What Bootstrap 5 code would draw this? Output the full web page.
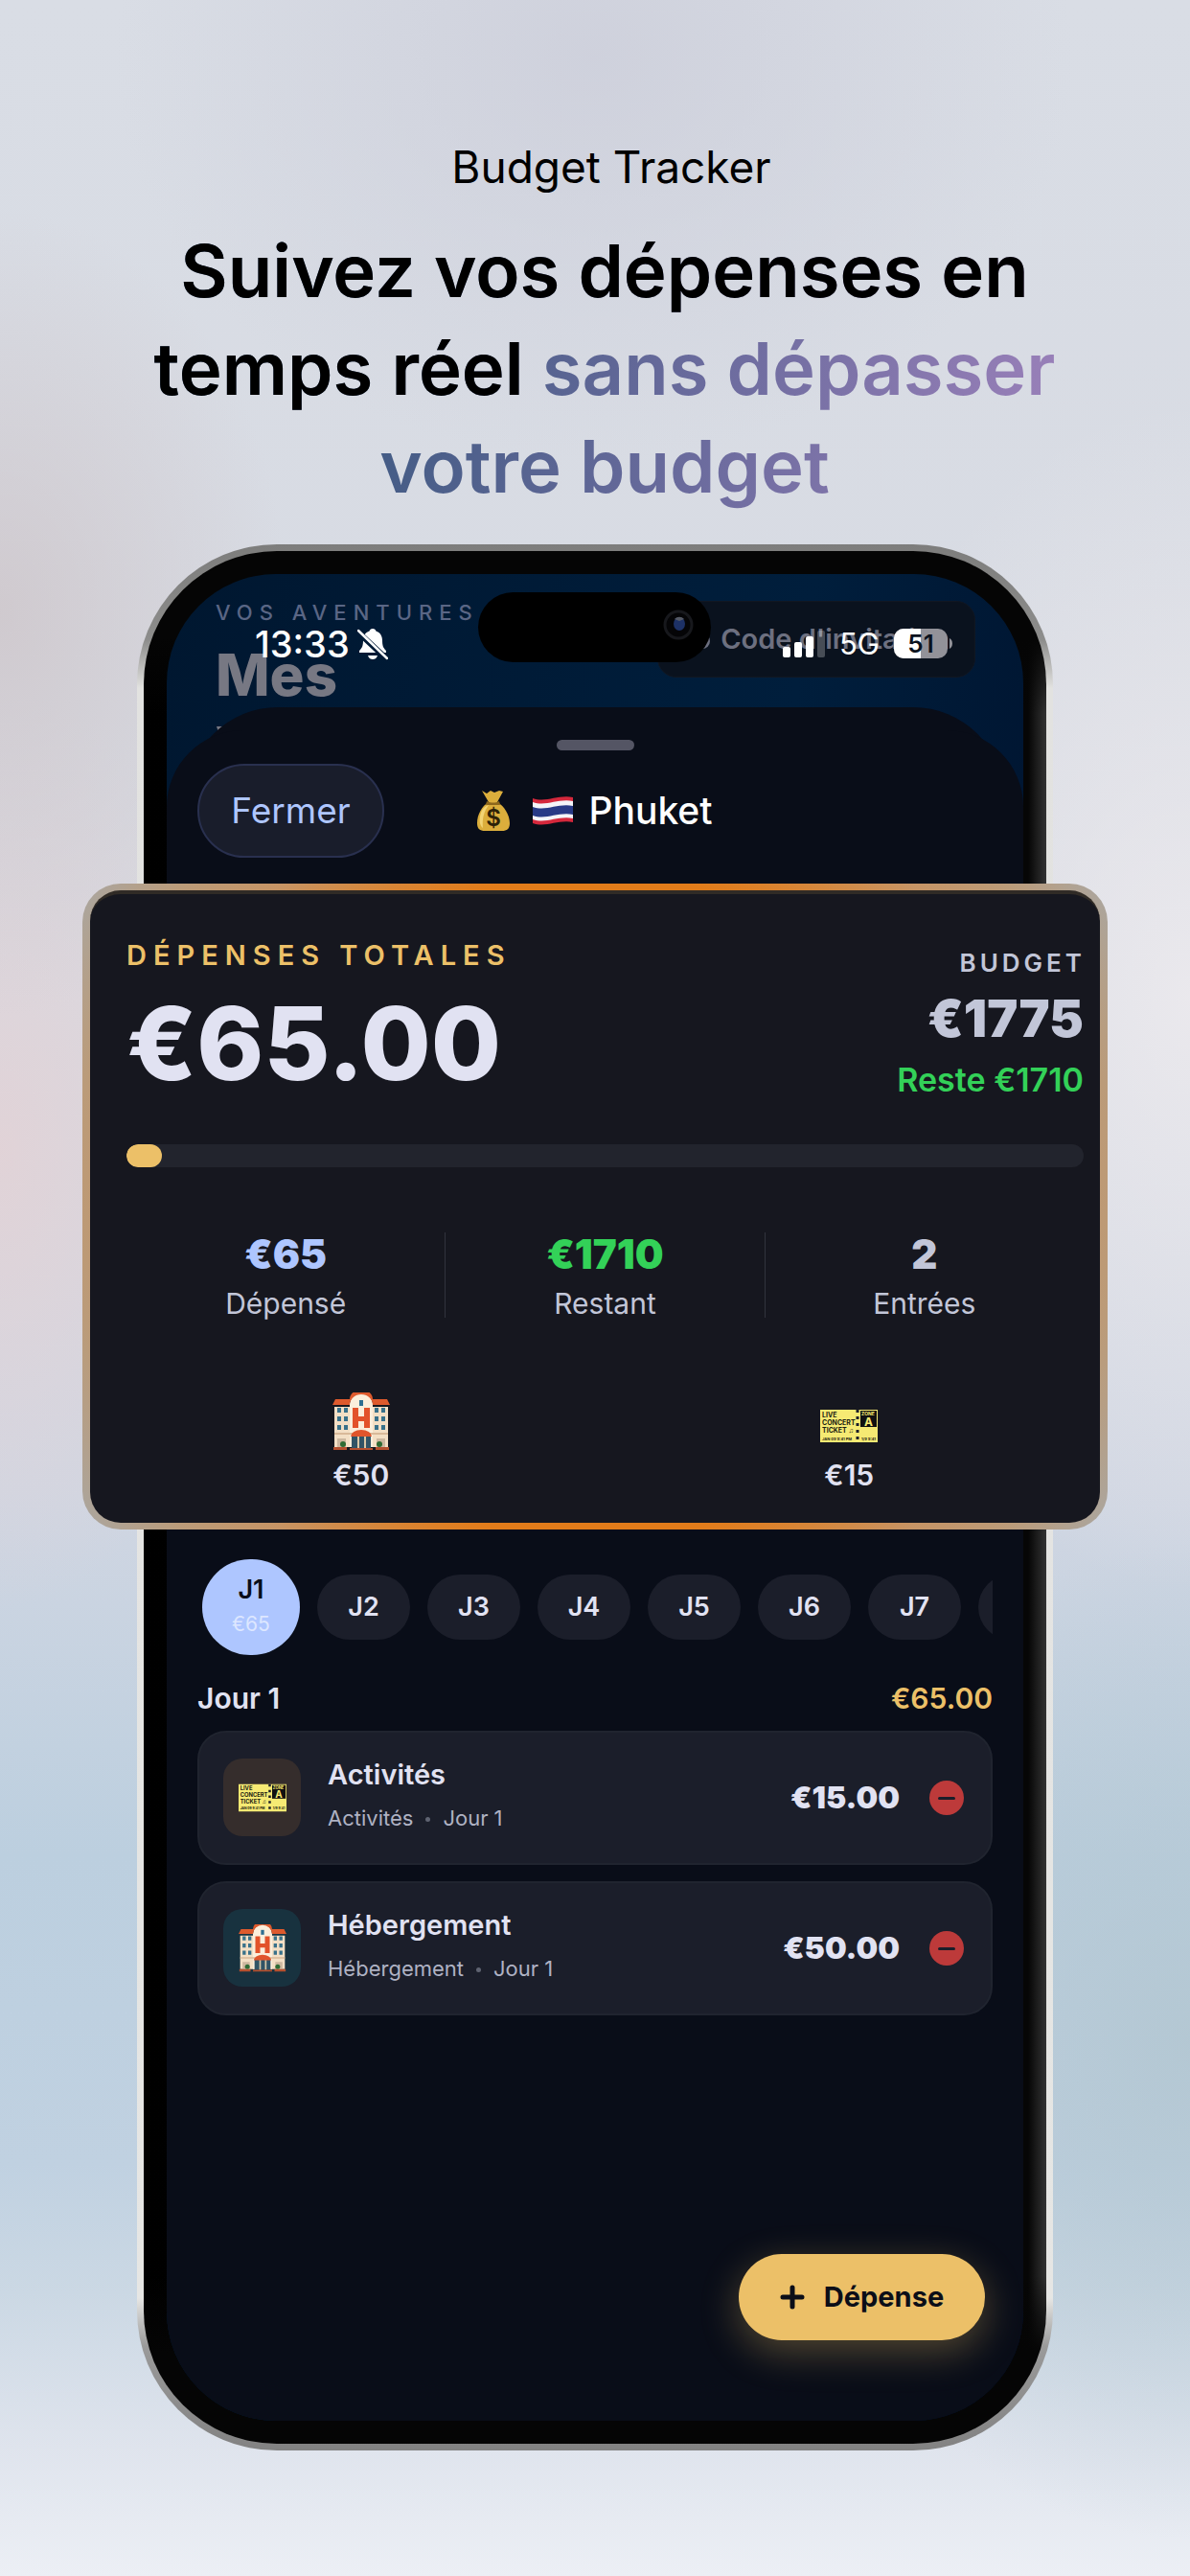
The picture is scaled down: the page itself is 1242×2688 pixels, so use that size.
<!DOCTYPE html>
<html lang="fr">
<head>
<meta charset="utf-8">
<meta name="viewport" content="width=device-width, initial-scale=1">
<title>Budget Tracker</title>
<link rel="stylesheet" href="https://cdn.jsdelivr.net/npm/bootstrap@5.3.0/dist/css/bootstrap.min.css">
<script src="https://cdn.jsdelivr.net/npm/bootstrap@5.3.0/dist/js/bootstrap.bundle.min.js" defer></script>
<style>
  :root { --ink:#090d18; --gold:#ecc068; --mist:#e1e2f2; --steel:#c2c6d8; --green:#33d158; --sky:#aec6ff; }
  body {
    font-family: Inter, "Liberation Sans", sans-serif; color: var(--mist); min-height: 2688px;
    background:
      radial-gradient(300px 420px at 0 640px, rgba(205,196,200,.75), transparent),
      radial-gradient(260px 480px at 0 1200px, rgba(226,210,214,.9), transparent),
      radial-gradient(420px 520px at 100% 2130px, rgba(178,198,209,.85), transparent),
      radial-gradient(380px 620px at 100% 1040px, rgba(236,234,238,.9), transparent),
      radial-gradient(500px 420px at 620px 60px, rgba(204,206,218,.8), transparent),
      linear-gradient(#d9dde5 0, #d7dae2 40%, #d0d6e2 58%, #bccfdf 72%, #c0d1e1 84%, #cbd8e4 89%, #dfe4ed 95%, #eceff5 100%);
  }
  .promo { padding-top: 144px; color: #000; }
  .promo-kicker { font-size: 46px; line-height: 60px; margin-bottom: 27px; padding-left: 34px; }
  .promo-title {
    font-size: 76px; line-height: 102px; font-weight: 600; margin-bottom: 31px; padding-left: 20px;
    background: linear-gradient(100deg, #3f5a82 30%, #6f6da0 62%, #a083bd 92%); -webkit-background-clip: text; background-clip: text; color: transparent;
  }
  .promo-title span { color: #000; }

  .device { width: 77%; max-width: 956px; padding: 7px; border-radius: 146px; background: linear-gradient(#7d7d7c 0, #8d8d8c 100px, #e2e2e0 150px, #e6e6e4 1830px, #9a9a9a 1880px, #828282 100%); }
  .bezel { padding: 24px; border-radius: 139px; background: linear-gradient(#050505 90px, transparent 170px, transparent 1800px, #050505 1880px), linear-gradient(90deg, #000 0, #060606 97%, #060606 98%, #333 100%); }
  .viewport { position: relative; border-radius: 114px; background: linear-gradient(100deg, #001730 0, #001e3c 55%, #00112c 90%); }

  .island { position: absolute; left: 50%; top: 19px; width: 243px; height: 73px; margin-left: -122px; border-radius: 37px; background: #000; z-index: 3; }
  .island svg { position: absolute; right: 18px; top: 17px; }
  .under { height: 139px; padding: 28px 50px 0 51px; }
  .eyebrow { font-size: 22px; line-height: 24px; font-weight: 500; letter-spacing: 7px; color: #5a6685; }
  .under-title { font-size: 60px; line-height: 72px; font-weight: 800; color: #777883; margin-top: 17px; }
  .under-copy { position: absolute; left: 52px; top: 159px; }
  .invite { height: 80px; width: 332px; border: 1px solid #111722; border-radius: 20px; background: #0a121e; color: #6d7080; font-size: 29px; font-weight: 600; padding: 0 26px 0 40px; }
  .status { position: absolute; inset: 55px 73px auto 92px; height: 36px; color: #fff; z-index: 4; }
  .clock { font-size: 38px; line-height: 36px; font-weight: 500; }
  .network { font-size: 31px; line-height: 36px; margin: 0 15px; }

  .sheet { position: relative; padding: 34px 32px 84px; border-radius: 0 0 114px 114px; }
  .sheet::before { content: ""; position: absolute; inset: 0 20px auto 21px; height: 140px; border-radius: 95px 95px 0 0; background: var(--ink); }
  .sheet::after { content: ""; position: absolute; inset: 24px 0 0; border-radius: 80px 80px 114px 114px; background: var(--ink); }
  .sheet > * { position: relative; z-index: 1; }
  .grabber { width: 81px; height: 11px; border-radius: 6px; background: #545564; }
  .sheet-head { height: 98px; margin-top: 14px; }
  .btn-close-sheet { width: 195px; height: 98px; border: 2px solid #29304f; border-radius: 49px; background: #191d2b; color: var(--sky); font-size: 37px; }
  .btn-close-sheet:hover { background: #20263a; color: var(--sky); }
  .sheet-title { position: absolute; left: 0; right: 0; font-size: 39px; line-height: 48px; font-weight: 500; color: #fff; margin: 0; }

  .overview { margin: 27px -120px 0; padding: 7px 8px; border-radius: 40px; background: radial-gradient(circle, #e27c1a 350px, #c69465 470px, #bb9b79 545px, #aca59c 620px); }
  .overview-body { border-radius: 32px; padding: 46px 17px 0 38px; height: 660px; background: #16171f; border-top: 4px solid #302b26; }
  .label-gold { font-size: 29px; line-height: 36px; font-weight: 600; letter-spacing: 7px; color: var(--gold); }
  .total { font-size: 106px; line-height: 110px; font-weight: 800; margin-top: 19px; }
  .budget-side { padding-top: 10px; }
  .label-steel { font-size: 26px; line-height: 32px; font-weight: 600; letter-spacing: 4px; margin-right: -2px; color: var(--steel); }
  .cap-total { font-size: 54px; line-height: 60px; font-weight: 900; color: var(--steel); margin-top: 12px; }
  .left-over { font-size: 34px; line-height: 40px; font-weight: 600; color: var(--green); margin-top: 14px; }
  .meter { height: 24px; border-radius: 12px; background: #22242d; margin-top: 47px; }
  .meter .progress-bar { border-radius: 12px; background: var(--gold); }
  .stats { margin-top: 68px; }
  .stats > div { height: 89px; }
  .stats > div + div { border-left: 1px solid #31333d; }
  .stat-value { font-size: 42px; line-height: 46px; font-weight: 900; }
  .stat-name { font-size: 30px; line-height: 38px; color: var(--steel); margin-top: 9px; }
  .cats { margin: 78px -10px 0; }
  .cat-sum { font-size: 30px; line-height: 36px; font-weight: 600; margin-top: 6px; }

  .day-strip { margin-top: 31px; height: 100px; overflow: hidden; gap: 18px; padding-left: 5px; }
  .day-pill { flex: 0 0 97px; height: 68px; border: 0; border-radius: 34px; padding: 0; background: #1b1e2a; color: var(--mist); font-size: 27px; font-weight: 600; }
  .day-pill.on { flex-basis: 102px; height: 100px; border-radius: 50px; background: var(--sky); color: var(--ink); line-height: 34px; }
  .day-pill.on span { font-size: 21px; line-height: 34px; font-weight: 400; color: #dde7ff; margin-top: 2px; }
  .day-head { font-size: 30px; line-height: 36px; font-weight: 600; margin-top: 27px; }
  .entry { height: 140px; border: 2px solid #20242f; border-radius: 30px; background: #1b1e2a; padding: 0 28px 0 25px; }
  .entry + .entry { margin-top: 17px; }
  .entry-icon { width: 81px; height: 81px; border-radius: 20px; margin-bottom: 1px; }
  .entry-text { margin: 0 0 8px 28px; }
  .entry-name { font-size: 29px; line-height: 36px; font-weight: 600; }
  .entry-meta { font-size: 22px; line-height: 28px; color: #afb2c3; margin-top: 13px; }
  .entry-meta i { width: 5px; height: 5px; border-radius: 50%; background: #5f6371; margin: 4px 13px 0; }
  .entry-sum { font-size: 32px; font-weight: 900; margin-right: 31px; }
  .btn-minus { width: 36px; height: 36px; padding: 0; border: 0; border-radius: 50%; background: #bd3a3a; }
  .btn-minus::before { content: ""; display: block; width: 18px; height: 3px; margin: auto; border-radius: 2px; background: #1b1e2a; }
  .btn-add { width: 257px; height: 90px; margin: 249px 8px 0 0; gap: 20px; border: 0; border-radius: 45px; background: #ecc068; color: #0b0e18; font-size: 29px; font-weight: 700; box-shadow: 0 12px 40px rgba(236,192,104,.32); }
</style>
</head>
<body>
<svg class="d-none" aria-hidden="true">
  <symbol id="hotel" viewBox="0 0 60 60">
    <path d="M2 14h56v42H2z" fill="#f3dfc5"/><path d="M18 56V12a12 12 0 0 1 24 0v44z" fill="#fbeedb"/>
    <path d="M0 12l3-6h15a12 10 0 0 1 24 0h15l3 6H42a12 11 0 0 0-24 0z" fill="#dd5a2d"/><path d="M20 13V9a10 7 0 0 1 20 0v4z" fill="#fbeedb"/>
    <path d="M28 7h4v6h-4z" fill="#2f6f91"/>
    <path d="M21 15h6v9h6v-9h6v21h-6v-7h-6v7h-6z" fill="#e2522a"/>
    <path d="M5 15h4v5H5zm7 0h4v5h-4zM5 24h4v5H5zm7 0h4v5h-4zM5 33h4v5H5zm7 0h4v5h-4zM44 15h4v5h-4zm7 0h4v5h-4zM44 24h4v5h-4zm7 0h4v5h-4zM44 33h4v5h-4zm7 0h4v5h-4z" fill="#38718a"/>
    <path d="M2 41h56v2H2z" fill="#d9b999"/><path d="M20 44h20v13H20z" fill="#315466"/><path d="M26 44h2v13h-2zm7 0h2v13h-2z" fill="#d9c7a6"/>
    <path d="M19 45a11 7 0 0 1 22 0z" fill="#e0552c"/><path d="M5 47h9v9H5zm41 0h9v9h-9z" fill="#cdb8a0"/>
    <circle cx="11" cy="53" r="3" fill="#2e6b34"/><circle cx="49" cy="53" r="3" fill="#2e6b34"/><path d="M1 56h14v3H1zm44 0h14v3H45zM18 57h24v2H18z" fill="#b5502f"/>
  </symbol>
  <symbol id="ticket" viewBox="0 0 60 34">
    <path d="M0 0h60v34H0z" fill="#f6ea73"/><path d="M42 1h17v17H42z" fill="#111"/>
    <path d="M39 0v34" stroke="#1b1e2a" stroke-width="3" stroke-dasharray="3 4"/>
    <g font-family="Inter, sans-serif" font-weight="700" fill="#1c1c12"><text x="2" y="8" font-size="7">LIVE</text><text x="2" y="16" font-size="7">CONCERT</text><text x="2" y="24" font-size="7">TICKET ♫</text><text x="2" y="32" font-size="4">JAN 09  9:41 PM</text><text x="43" y="32" font-size="4">1/9 9:41</text></g>
    <g font-family="Inter, sans-serif" font-weight="700" fill="#f6ea73"><text x="43" y="6" font-size="5">ZONE</text><text x="46" y="17" font-size="12">A</text></g>
  </symbol>
</svg>

<header class="promo text-center">
  <p class="promo-kicker">Budget Tracker</p>
  <h1 class="promo-title"><span>Suivez vos dépenses en<br>temps réel</span> sans dépasser<br>votre budget</h1>
</header>

<main class="device mx-auto">
  <div class="bezel">
    <div class="viewport">
      <div class="status d-flex justify-content-between align-items-center">
        <div class="d-flex align-items-center gap-2">
          <span class="clock">13:33</span>
          <svg width="32" height="34" viewBox="0 0 32 34" fill="#fff" aria-label="Silencieux"><path d="M16 1c2 0 3 1 3.400 2.500C24 5 26 9 26 13c0 6 1 8 4 11v2H2v-2c3-3 4-5 4-11 0-4 2-8 6.600-9.500C13 2 14 1 16 1zM11 29h10c-1 3-3 4-5 4s-4-1-5-4z"/><path d="M0 4l31 29" stroke="#001a36" stroke-width="6"/><path d="M1 3l30 29" stroke="#fff" stroke-width="2.500" stroke-linecap="round"/></svg>
        </div>
        <div class="d-flex align-items-center">
          <svg width="44" height="30" viewBox="0 0 44 30" fill="#fff" aria-label="Signal"><rect y="18" width="8" height="11" rx="2"/><rect x="12" y="13" width="8" height="16" rx="2"/><rect x="24" y="7" width="8" height="22" rx="2"/><rect x="36" y="1" width="8" height="28" rx="2" opacity=".25"/></svg>
          <span class="network">5G</span>
          <svg width="62" height="32" viewBox="0 0 62 32" aria-label="Batterie"><rect width="56" height="31" rx="10" fill="#929299"/><path d="M28 0H10A10 10 0 0 0 0 10v11a10 10 0 0 0 10 10h18z" fill="#fff"/><path d="M58 10c4 2 4 9 0 11z" fill="#929299"/><text x="28" y="25" font-size="26" font-weight="600" font-family="Inter, sans-serif" text-anchor="middle" fill="#0a121e">51</text></svg>
        </div>
      </div>
      <div class="island"><svg width="32" height="34" viewBox="0 0 32 34"><circle cx="16" cy="17" r="14" fill="#050507" stroke="#17181c" stroke-width="3"/><ellipse cx="17" cy="16" rx="6" ry="7" fill="#1d3166"/><path d="M12 11c3-3 7-3 10 0l-5 2z" fill="#555a66"/></svg></div>
      <div class="under d-flex justify-content-between">
        <div class="text-nowrap">
          <div class="eyebrow">VOS AVENTURES</div>
          <div class="under-title">Mes</div>
          <svg class="under-copy" width="8" height="7" viewBox="0 0 8 7" aria-hidden="true"><path d="M0 0h7L2 6z" fill="#777883"/></svg>
        </div>
        <div class="invite d-flex align-items-center justify-content-between text-nowrap">
          <svg width="16" height="22" viewBox="0 0 16 22"><circle cx="6" cy="13" r="8" fill="#6d7080"/><path d="M6 9v8M2 13h8" stroke="#0a121e" stroke-width="2"/></svg>
          <span>Code d'invitation</span>
        </div>
      </div>

      <section class="sheet">
        <div class="grabber mx-auto"></div>
        <div class="sheet-head d-flex align-items-center">
          <h2 class="sheet-title d-flex justify-content-center align-items-center">
            <svg class="me-4" width="34" height="44" viewBox="0 0 34 44" aria-hidden="true"><path d="M5 1l5 3 4-3 4 2 5-2 4 1-6 11c7 4 13 13 13 22 0 6-3 8-8 8H8c-5 0-8-2-8-8 0-9 5-18 12-22z" fill="#dcae3c"/><path d="M10 12c5 2 9 2 13 0l1 4H9z" fill="#8d671c"/><path d="M4 24c2-5 5-7 8-8-5 7-7 14-6 24-4-3-4-10-2-16z" fill="#f3d475"/><text x="17" y="38" text-anchor="middle" font-family="Inter, sans-serif" font-size="24" font-weight="600" fill="#2c2208">$</text></svg>
            <svg class="me-3" width="42" height="30" viewBox="0 0 42 30" aria-hidden="true"><path d="M0 2c14 5 26-4 42-1v26c-16-3-28 6-42 1z" fill="#d5283c"/><path d="M0 6c14 5 26-4 42-1v18c-16-3-28 6-42 1z" fill="#f4f4f8"/><path d="M0 11c14 5 26-4 42-1v9c-16-3-28 6-42 1z" fill="#283a86"/></svg>
            <span>Phuket</span>
          </h2>
          <button type="button" class="btn btn-close-sheet position-relative">Fermer</button>
        </div>

        <section class="overview">
          <div class="overview-body">
            <div class="d-flex justify-content-between">
              <div><div class="label-gold">DÉPENSES TOTALES</div><div class="total">€65.00</div></div>
              <div class="budget-side text-end"><div class="label-steel">BUDGET</div><div class="cap-total">€1775</div><div class="left-over">Reste €1710</div></div>
            </div>
            <div class="progress meter" role="progressbar" aria-label="Budget dépensé" aria-valuenow="65" aria-valuemin="0" aria-valuemax="1775"><div class="progress-bar" style="width:3.66%"></div></div>
            <div class="stats row g-0 text-center">
              <div class="col"><div class="stat-value" style="color:var(--sky)">€65</div><div class="stat-name">Dépensé</div></div>
              <div class="col"><div class="stat-value" style="color:var(--green)">€1710</div><div class="stat-name">Restant</div></div>
              <div class="col"><div class="stat-value" style="color:var(--steel)">2</div><div class="stat-name">Entrées</div></div>
            </div>
            <div class="cats row g-0 text-center">
              <div class="col"><svg width="60" height="62" aria-hidden="true"><use href="#hotel"/></svg><div class="cat-sum">€50</div></div>
              <div class="col"><svg width="60" height="62" aria-hidden="true"><use href="#ticket" y="4"/></svg><div class="cat-sum">€15</div></div>
            </div>
          </div>
        </section>

        <div class="day-strip d-flex align-items-center">
          <button type="button" class="day-pill on d-flex flex-column align-items-center justify-content-center">J1<span>€65</span></button>
          <button type="button" class="day-pill">J2</button>
          <button type="button" class="day-pill">J3</button>
          <button type="button" class="day-pill">J4</button>
          <button type="button" class="day-pill">J5</button>
          <button type="button" class="day-pill">J6</button>
          <button type="button" class="day-pill">J7</button>
          <button type="button" class="day-pill" aria-label="Jour 8"></button>
        </div>

        <div class="day-head d-flex justify-content-between mb-3"><span>Jour 1</span><span style="color:var(--gold)">€65.00</span></div>
        <div class="entry d-flex align-items-center">
          <div class="entry-icon d-flex align-items-center justify-content-center" style="background:#352d2c"><svg width="50" height="50" aria-hidden="true"><use href="#ticket"/></svg></div>
          <div class="entry-text flex-grow-1"><div class="entry-name">Activités</div><div class="entry-meta d-flex align-items-center">Activités<i></i>Jour 1</div></div>
          <div class="entry-sum">€15.00</div>
          <button type="button" class="btn btn-minus" aria-label="Supprimer Activités"></button>
        </div>
        <div class="entry d-flex align-items-center">
          <div class="entry-icon d-flex align-items-center justify-content-center" style="background:#18323f"><svg width="50" height="50" aria-hidden="true"><use href="#hotel"/></svg></div>
          <div class="entry-text flex-grow-1"><div class="entry-name">Hébergement</div><div class="entry-meta d-flex align-items-center">Hébergement<i></i>Jour 1</div></div>
          <div class="entry-sum">€50.00</div>
          <button type="button" class="btn btn-minus" aria-label="Supprimer Hébergement"></button>
        </div>
        <button type="button" class="btn btn-add d-flex align-items-center justify-content-center ms-auto"><svg width="26" height="26" viewBox="0 0 26 26" stroke="#0b0e18" stroke-width="5" stroke-linecap="round" aria-hidden="true"><path d="M13 3v20M3 13h20"/></svg>Dépense</button>
      </section>
    </div>
  </div>
</main>
</body>
</html>
